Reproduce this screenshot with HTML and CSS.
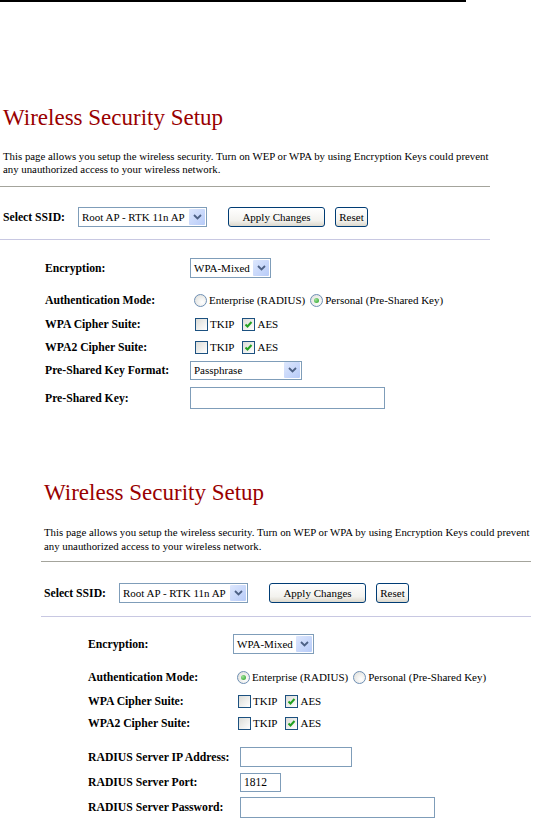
FILE: index.html
```html
<!DOCTYPE html>
<html lang="en">
<head>
    <meta charset="UTF-8">
    <meta name="viewport" content="width=device-width, initial-scale=1.0">
    <title>Wireless Security Setup</title>
    <link rel="stylesheet" href="styles.css">
</head>
<body>
    <div class="top-rule"></div>

    <section class="shot shot-a">
        <h1 class="title">Wireless Security Setup</h1>
        <p class="intro">This page allows you setup the wireless security. Turn on WEP or WPA by using Encryption Keys could prevent<br>any unauthorized access to your wireless network.</p>
        <div class="rule"></div>
        <div class="ssid-bar">
            <b class="ssid-label">Select SSID:</b>
            <span class="select ssid-select"><span class="select-text">Root AP - RTK 11n AP</span><span class="select-btn"><svg width="9" height="6" viewBox="0 0 9 6"><path d="M1 1l3.5 3.5L8 1" fill="none" stroke="#4d6185" stroke-width="1.8"/></svg></span></span>
            <button class="btn btn-apply">Apply Changes</button>
            <button class="btn btn-reset">Reset</button>
        </div>
        <div class="rule rule-light"></div>
        <div class="form">
            <div class="row">
                <b>Encryption:</b>
                <span class="select enc-select"><span class="select-text">WPA-Mixed</span><span class="select-btn"><svg width="9" height="6" viewBox="0 0 9 6"><path d="M1 1l3.5 3.5L8 1" fill="none" stroke="#4d6185" stroke-width="1.8"/></svg></span></span>
            </div>
            <div class="row row-spaced">
                <b>Authentication Mode:</b>
                <span class="choices"><span class="radio"></span>Enterprise (RADIUS)<span class="radio on"></span>Personal (Pre-Shared Key)</span>
            </div>
            <div class="row">
                <b>WPA Cipher Suite:</b>
                <span class="choices"><span class="check"></span>TKIP<span class="check on"><svg viewBox="0 0 11 11"><path d="M2.5 5.5l2 2 4-4.5" fill="none" stroke="#21a121" stroke-width="2"/></svg></span>AES</span>
            </div>
            <div class="row row-tight">
                <b>WPA2 Cipher Suite:</b>
                <span class="choices"><span class="check"></span>TKIP<span class="check on"><svg viewBox="0 0 11 11"><path d="M2.5 5.5l2 2 4-4.5" fill="none" stroke="#21a121" stroke-width="2"/></svg></span>AES</span>
            </div>
            <div class="row row-tight">
                <b>Pre-Shared Key Format:</b>
                <span class="select fmt-select"><span class="select-text">Passphrase</span><span class="select-btn"><svg width="9" height="6" viewBox="0 0 9 6"><path d="M1 1l3.5 3.5L8 1" fill="none" stroke="#4d6185" stroke-width="1.8"/></svg></span></span>
            </div>
            <div class="row row-last">
                <b>Pre-Shared Key:</b>
                <input class="field key-field" type="text">
            </div>
        </div>
    </section>

    <section class="shot shot-b">
        <h1 class="title">Wireless Security Setup</h1>
        <p class="intro">This page allows you setup the wireless security. Turn on WEP or WPA by using Encryption Keys could prevent<br>any unauthorized access to your wireless network.</p>
        <div class="rule"></div>
        <div class="ssid-bar">
            <b class="ssid-label">Select SSID:</b>
            <span class="select ssid-select"><span class="select-text">Root AP - RTK 11n AP</span><span class="select-btn"><svg width="9" height="6" viewBox="0 0 9 6"><path d="M1 1l3.5 3.5L8 1" fill="none" stroke="#4d6185" stroke-width="1.8"/></svg></span></span>
            <button class="btn btn-apply">Apply Changes</button>
            <button class="btn btn-reset">Reset</button>
        </div>
        <div class="rule rule-light"></div>
        <div class="form">
            <div class="row">
                <b>Encryption:</b>
                <span class="select enc-select"><span class="select-text">WPA-Mixed</span><span class="select-btn"><svg width="9" height="6" viewBox="0 0 9 6"><path d="M1 1l3.5 3.5L8 1" fill="none" stroke="#4d6185" stroke-width="1.8"/></svg></span></span>
            </div>
            <div class="row row-spaced">
                <b>Authentication Mode:</b>
                <span class="choices"><span class="radio on"></span>Enterprise (RADIUS)<span class="radio"></span>Personal (Pre-Shared Key)</span>
            </div>
            <div class="row">
                <b>WPA Cipher Suite:</b>
                <span class="choices"><span class="check"></span>TKIP<span class="check on"><svg viewBox="0 0 11 11"><path d="M2.5 5.5l2 2 4-4.5" fill="none" stroke="#21a121" stroke-width="2"/></svg></span>AES</span>
            </div>
            <div class="row row-flush">
                <b>WPA2 Cipher Suite:</b>
                <span class="choices"><span class="check"></span>TKIP<span class="check on"><svg viewBox="0 0 11 11"><path d="M2.5 5.5l2 2 4-4.5" fill="none" stroke="#21a121" stroke-width="2"/></svg></span>AES</span>
            </div>
            <div class="radius">
                <div class="row">
                    <b>RADIUS Server IP Address:</b>
                    <input class="field ip-field" type="text">
                </div>
                <div class="row">
                    <b>RADIUS Server Port:</b>
                    <input class="field port-field" type="text" value="1812">
                </div>
                <div class="row">
                    <b>RADIUS Server Password:</b>
                    <input class="field pass-field" type="password">
                </div>
            </div>
        </div>
    </section>
</body>
</html>
```

FILE: styles.css
```css
body {
    margin: 0;
    font-family: "Liberation Serif", "Times New Roman", serif;
    color: #000;
    background: #fff;
}
.top-rule {
    width: 466px;
    height: 2px;
    background: #000;
}
.shot {
    width: 490px;
}
.shot-a {
    margin-top: 103px;
}
.shot-b {
    margin: 71px 0 0 41px;
}
.title {
    margin: 0;
    padding-left: 3px;
    font-size: 23px;
    line-height: 26px;
    font-weight: normal;
    color: #990000;
}
.intro {
    margin: 19px 0 0;
    padding-left: 3px;
    font-size: 10.8px;
    line-height: 13px;
    white-space: nowrap;
}
.shot-b .intro {
    line-height: 14px;
}
.rule {
    height: 1px;
    margin-top: 10px;
    background: #a4a49c;
}
.rule-light {
    margin-top: 12px;
    background: #c8c8e2;
}
.shot-b .rule {
    margin-top: 8px;
}
.shot-b .rule-light {
    margin-top: 13px;
}
.ssid-bar {
    display: flex;
    align-items: center;
    height: 20px;
    margin-top: 20px;
    padding-left: 3px;
}
.shot-b .ssid-bar {
    margin-top: 21px;
}
.ssid-label {
    width: 75px;
}
b {
    font-size: 11.7px;
}
.select {
    display: flex;
    align-items: center;
    box-sizing: border-box;
    height: 20px;
    border: 1px solid #7f9db9;
    background: #fff;
    padding: 1px;
    font-size: 11px;
}
.select-text {
    flex: 1;
    padding-left: 2px;
    white-space: nowrap;
}
.select-btn {
    display: flex;
    align-items: center;
    justify-content: center;
    width: 16px;
    height: 16px;
    background: linear-gradient(135deg, #dde7fd, #b7cbf8);
    border-radius: 1px;
}
.ssid-select {
    width: 129px;
}
.enc-select {
    width: 81px;
}
.fmt-select {
    width: 112px;
    height: 19px;
}
.btn {
    box-sizing: border-box;
    height: 20px;
    padding: 0;
    border: 1px solid #003c74;
    border-radius: 3px;
    background: linear-gradient(#ffffff, #f3f2ee 70%, #dcd8cc);
    font-family: "Liberation Serif", "Times New Roman", serif;
    font-size: 11px;
    color: #000;
}
.btn-apply {
    width: 97px;
    margin-left: 21px;
}
.btn-reset {
    width: 33px;
    margin-left: 10px;
}
.form {
    padding-left: 45px;
    margin-top: 17px;
}
.shot-b .form {
    padding-left: 47px;
    margin-top: 16px;
}
.row {
    display: grid;
    grid-template-columns: 145px auto;
    align-items: center;
    height: 22px;
    margin-top: 2px;
}
.form > .row:first-child {
    margin-top: 0;
}
.row-spaced {
    margin-top: 10px;
}
.shot-b .row-spaced {
    margin-top: 11px;
}
.row-tight {
    margin-top: 1px;
}
.row-flush {
    margin-top: 0;
}
.row-last {
    margin-top: 6px;
}
.choices {
    display: flex;
    align-items: center;
    font-size: 11px;
    white-space: nowrap;
}
.radio {
    box-sizing: border-box;
    width: 13px;
    height: 13px;
    margin: 0 2px 0 4px;
    border: 1px solid #6e8fb4;
    border-radius: 50%;
    background: radial-gradient(circle at 65% 65%, #fff, #dcdcd7);
    display: flex;
    align-items: center;
    justify-content: center;
}
.choices .radio:not(:first-child) {
    margin-left: 5px;
}
.radio.on::after {
    content: "";
    width: 5px;
    height: 5px;
    border-radius: 50%;
    background: radial-gradient(circle at 35% 35%, #a0e09a, #21a121);
}
.check {
    box-sizing: border-box;
    width: 13px;
    height: 13px;
    margin: 0 2px 0 5px;
    border: 1px solid #1c5180;
    background: linear-gradient(135deg, #dcdcd7, #fff);
    display: flex;
}
.choices .check.on {
    margin-left: 8px;
}
.check svg {
    width: 11px;
    height: 11px;
}
.field {
    box-sizing: border-box;
    height: 22px;
    margin: 0;
    padding: 0 3px;
    border: 1px solid #7f9db9;
    font-family: "Liberation Serif", "Times New Roman", serif;
    font-size: 11.5px;
    outline: none;
}
.key-field {
    width: 195px;
}
.radius {
    margin-top: 12px;
}
.radius .row {
    grid-template-columns: 152px auto;
    margin-top: 3px;
}
.radius .row:first-child {
    margin-top: 0;
}
.ip-field {
    width: 112px;
    height: 20px;
}
.port-field {
    width: 41px;
    height: 19px;
}
.pass-field {
    width: 195px;
    height: 21px;
}
```
